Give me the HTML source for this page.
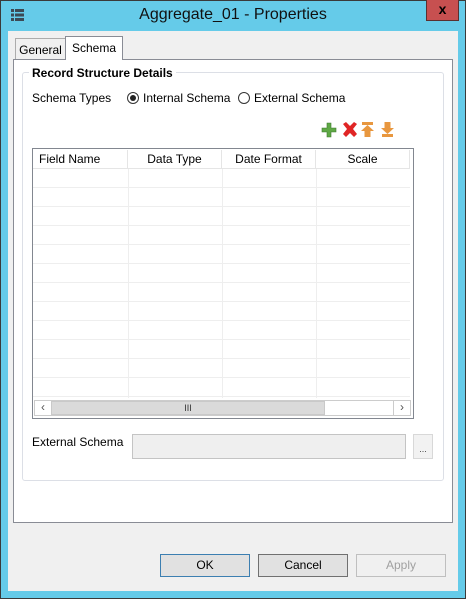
<!DOCTYPE html>
<html><head><style>
*{box-sizing:border-box;margin:0;padding:0}
body{width:466px;height:599px;overflow:hidden;background:#65cbe9;font-family:"Liberation Sans",sans-serif;font-size:12px;color:#000;position:relative}
.a{position:absolute}
.title{left:0;top:6px;width:466px;text-align:center;font-size:16px;color:#111}
.close{left:426px;top:0;width:33px;height:21px;background:#c75050;border:1px solid #5a3030;border-top:none;color:#000;font-weight:bold;font-size:14px;text-align:center;line-height:19px}
.inner{left:8px;top:31px;width:450px;height:560px;background:#f0f0f0}
.panel{left:13px;top:59px;width:440px;height:464px;background:#fff;border:1px solid #898c95}
.tab{border:1px solid #acacac;border-bottom:none;background:#f0f0f0;text-align:center}
.group{left:22px;top:72px;width:422px;height:409px;border:1px solid #dcdfe6;border-radius:3px}
.radio{width:12px;height:12px;border:1px solid #333;border-radius:50%;background:#fff}
.tbl{left:32px;top:148px;width:382px;height:271px;border:1px solid #828790;background:#fff}
.hd{top:1px;height:19px;background:#fff;border-right:1px solid #e5e5e5;border-bottom:1px solid #e5e5e5;line-height:18px}
.btn{top:554px;width:90px;height:23px;border:1px solid #707070;background:#e1e1e1;text-align:center;line-height:21px}
</style></head><body>
<div class="a" style="left:0;top:0;width:466px;height:599px;border:1px solid #3a3a3a"></div>
<svg class="a" style="left:11px;top:9px" width="14" height="12"><g fill="#3c4a55"><rect x="0" y="0" width="3" height="3"/><rect x="4" y="0" width="9" height="3"/><rect x="0" y="4.5" width="3" height="3"/><rect x="4" y="4.5" width="9" height="3"/><rect x="0" y="9" width="3" height="3"/><rect x="4" y="9" width="9" height="3"/></g></svg>
<div class="a title">Aggregate_01 - Properties</div>
<div class="a close">x</div>
<div class="a inner"></div>
<div class="a panel"></div>
<div class="a tab" style="left:15px;top:38px;width:51px;height:21px;line-height:22px">General</div>
<div class="a tab" style="left:65px;top:36px;width:58px;height:24px;background:#fff;border-color:#898c95;line-height:22px">Schema</div>
<div class="a group"></div>
<div class="a" style="left:29px;top:65px;background:#fff;padding:0 3px;font-weight:bold;line-height:16px">Record Structure Details</div>
<div class="a" style="left:32px;top:91px">Schema Types</div>
<div class="a radio" style="left:127px;top:92px"><div style="width:6px;height:6px;background:#222;border-radius:50%;margin:2px"></div></div>
<div class="a" style="left:143px;top:91px">Internal Schema</div>
<div class="a radio" style="left:238px;top:92px"></div>
<div class="a" style="left:254px;top:91px">External Schema</div>
<svg class="a" style="left:321px;top:120px" width="78" height="18">
<path d="M6 3h4v5h5v4h-5v5h-4v-5h-5v-4h5z" fill="#5fa845" stroke="#3f7a2f" stroke-width=".6"/>
<path d="M22 4l3-2 4 4 4-4 3 2-4 5 4 5-3 3-4-4-4 4-3-3 4-5z" fill="#e02525"/>
<path d="M41 2h11v3h-11z M46.5 5 L53 11 H49.5 V17 H43.5 V11 H40 Z" fill="#e8973f"/>
<path d="M61 14h11v3h-11z M66.5 14 L73 8 H69.5 V2 H63.5 V8 H60 Z" fill="#e8973f"/>
</svg>
<div class="a tbl">
<div class="a hd" style="left:0;width:95px;padding-left:6px">Field Name</div>
<div class="a hd" style="left:95px;width:94px;text-align:center">Data Type</div>
<div class="a hd" style="left:189px;width:94px;text-align:center">Date Format</div>
<div class="a hd" style="left:283px;width:94px;text-align:center">Scale</div>
<div class="a" style="left:0;top:20px;width:377px;height:229px;background:repeating-linear-gradient(to bottom,transparent 0,transparent 18px,#eeeeee 18px,#eeeeee 19px)"></div>
<div class="a" style="left:95px;top:20px;width:1px;height:229px;background:#eeeeee"></div>
<div class="a" style="left:189px;top:20px;width:1px;height:229px;background:#eeeeee"></div>
<div class="a" style="left:283px;top:20px;width:1px;height:229px;background:#eeeeee"></div>
<div class="a" style="left:1px;top:251px;width:377px;height:16px;background:#fff;border:1px solid #ccc"></div>
<div class="a" style="left:2px;top:252px;width:16px;height:14px;text-align:center;line-height:13px;color:#555">&lsaquo;</div>
<div class="a" style="left:18px;top:252px;width:274px;height:14px;background:#dadada;border:1px solid #c9c9c9;text-align:center;line-height:12px;font-size:9px;color:#333">III</div>
<div class="a" style="left:360px;top:252px;width:17px;height:14px;border-left:1px solid #ccc;text-align:center;line-height:13px;color:#555">&rsaquo;</div>
</div>
<div class="a" style="left:32px;top:435px">External Schema</div>
<div class="a" style="left:132px;top:434px;width:274px;height:25px;border:1px solid #c4c4c4;background:#efefef"></div>
<div class="a" style="left:413px;top:434px;width:20px;height:25px;border:1px solid #d8d8d8;background:#f2f2f2;text-align:center;font-size:9px;line-height:28px;color:#444">...</div>
<div class="a btn" style="left:160px;border-color:#3c7fb1">OK</div>
<div class="a btn" style="left:258px">Cancel</div>
<div class="a btn" style="left:356px;border-color:#bfbfbf;background:#f0f0f0;color:#a0a0a0">Apply</div>
</body></html>
